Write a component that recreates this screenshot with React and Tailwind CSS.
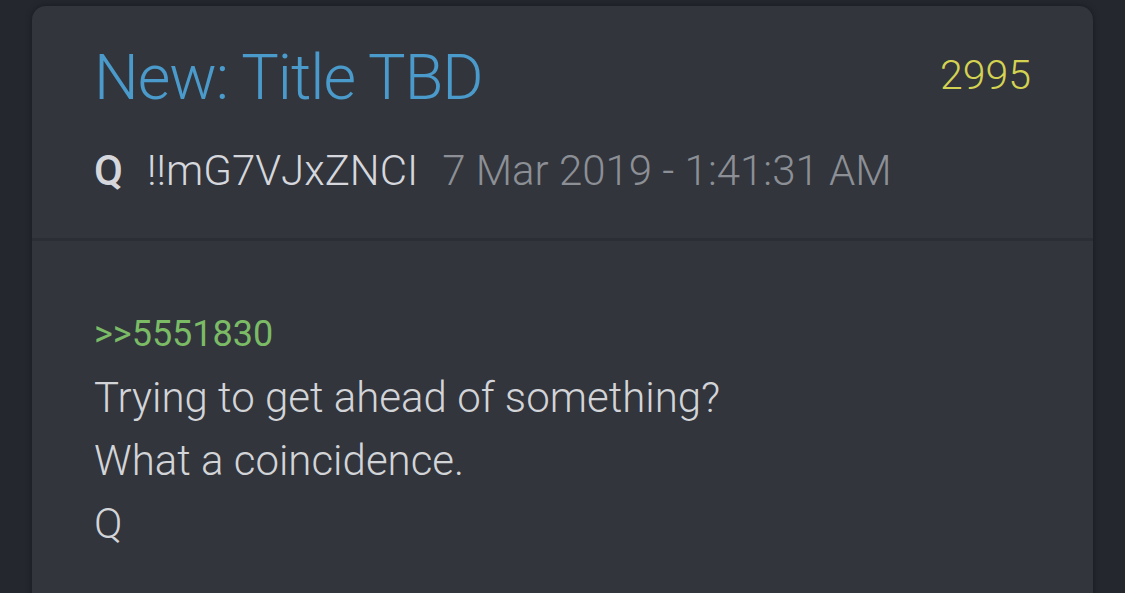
import React from "react";

const post = {
  title: "New: Title TBD",
  number: 2995,
  author: "Q",
  trip: "!!mG7VJxZNCI",
  date: "7 Mar 2019 - 1:41:31 AM",
  reply: ">>5551830",
  lines: ["Trying to get ahead of something?", "What a coincidence.", "Q"],
};

export default function App() {
  return (
    <div
      className="w-[1125px] h-[593px] overflow-hidden bg-[#24272e] pl-[32px] pr-[32px] pt-[6px]"
      style={{ fontFamily: "Roboto, 'Noto Sans', sans-serif" }}
    >
      <div className="h-[700px] rounded-t-[14px] bg-[#32353c] shadow-[0_0_6px_rgba(0,0,0,0.35)]">
        {/* Header */}
        <header className="border-b-[3px] border-[#2b2e34] pl-[62px] pr-[62px] pt-[34px] pb-[35px]">
          <div className="flex items-start justify-between">
            <h1 className="text-[63px] leading-[76px] font-light tracking-[-1px] text-[#4a9bcb]">
              {post.title}
            </h1>
            <span className="mt-[7px] text-[41px] leading-[56px] font-light text-[#d4d251]">
              {post.number}
            </span>
          </div>
          <div className="mt-[23px] flex items-baseline text-[42px] leading-[64px]">
            <span className="font-medium text-[#d5d7dc]">{post.author}</span>
            <span className="ml-[24px] font-light text-[#d5d7dc]">{post.trip}</span>
            <span className="ml-[24px] font-light text-[#8c8f95]">{post.date}</span>
          </div>
        </header>

        {/* Body */}
        <section className="pl-[62px] pr-[62px] pt-[62px] text-[42px] leading-[63px] font-light">
          <div className="text-[36px] text-[#7bbb66] font-normal">{post.reply}</div>
          {post.lines.map((line) => (
            <div key={line} className="text-[#d2d4d8]">
              {line}
            </div>
          ))}
        </section>
      </div>
    </div>
  );
}
